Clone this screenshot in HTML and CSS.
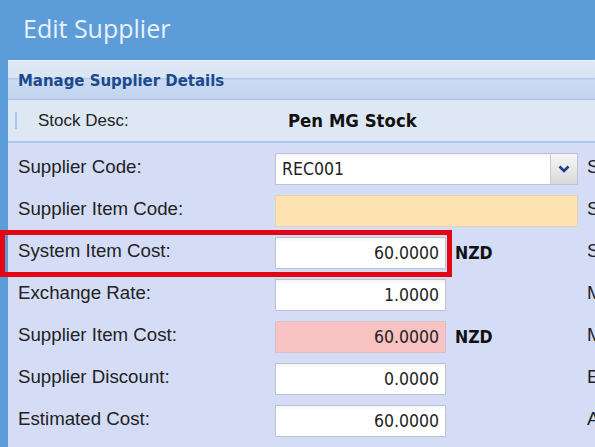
FILE: index.html
```html
<!DOCTYPE html>
<html>
<head>
<meta charset="utf-8">
<link rel="stylesheet" href="styles.css">
</head>
<body>
<div class="page">
  <div class="title">Edit Supplier</div>
  <div class="panel">
    <div class="panel-head">Manage Supplier Details</div>
    <div class="stock-row">
      <span class="stock-bar"></span>
      <span class="stock-label">Stock Desc:</span>
      <span class="stock-value">Pen MG Stock</span>
    </div>
    <div class="form">
      <div class="row">
        <div class="label">Supplier Code:</div>
        <div class="combo"><div class="combo-text">REC001</div><div class="combo-btn"><svg width="12" height="8" viewBox="0 0 12 8"><path d="M1.5 1.5 L6 6 L10.5 1.5" fill="none" stroke="#1c3f8c" stroke-width="2.6"/></svg></div></div>
        <div class="cut">S</div>
      </div>
      <div class="row">
        <div class="label">Supplier Item Code:</div>
        <div class="field wide orange"></div>
        <div class="cut">S</div>
      </div>
      <div class="row">
        <span class="highlight"></span>
        <div class="label">System Item Cost:</div>
        <div class="field num">60.0000</div>
        <div class="unit">NZD</div>
        <div class="cut">S</div>
      </div>
      <div class="row">
        <div class="label">Exchange Rate:</div>
        <div class="field num">1.0000</div>
        <div class="unit"></div>
        <div class="cut">M</div>
      </div>
      <div class="row">
        <div class="label">Supplier Item Cost:</div>
        <div class="field num pink">60.0000</div>
        <div class="unit">NZD</div>
        <div class="cut">M</div>
      </div>
      <div class="row">
        <div class="label">Supplier Discount:</div>
        <div class="field num">0.0000</div>
        <div class="unit"></div>
        <div class="cut">E</div>
      </div>
      <div class="row">
        <div class="label">Estimated Cost:</div>
        <div class="field num">60.0000</div>
        <div class="unit"></div>
        <div class="cut">A</div>
      </div>
    </div>
  </div>
</div>
</body>
</html>
```
FILE: styles.css
```css
html, body {
  margin: 0;
  padding: 0;
}
body {
  background: #5b9cd9;
  width: 595px;
  height: 447px;
  overflow: hidden;
}
.page {
  width: 595px;
  height: 447px;
  overflow: hidden;
}
.title {
  height: 60px;
  box-sizing: border-box;
  padding: 11px 0 0 23px;
  font-family: "Open Sans", sans-serif;
  font-size: 25px;
  color: #eaf1fa;
  line-height: 34px;
}
.panel {
  margin-left: 8px;
  width: 620px;
  height: 400px;
  background: #d5ddf6;
}
.panel-head {
  height: 40px;
  box-sizing: border-box;
  border-top: 1px solid #eef4fb;
  border-bottom: 1px solid #a9c3e8;
  background: linear-gradient(to bottom, #dfe8f5 0, #d9e4f4 17px, #b3cbea 17px, #b3cbea 18px, #cbdbf2 19px, #c2d4ef 38px);
  padding-left: 10px;
  font-family: "DejaVu Sans", sans-serif;
  font-stretch: condensed;
  font-weight: bold;
  font-size: 16.6px;
  color: #1b4a8e;
  line-height: 39px;
}
.stock-row {
  height: 43px;
  box-sizing: border-box;
  border-bottom: 2px solid #a9cbe9;
  background: #dee8f5;
  display: flex;
  align-items: center;
}
.stock-bar {
  width: 2px;
  height: 17px;
  margin-left: 7px;
  background: #a5c6f0;
}
.stock-label {
  margin-left: 21px;
  width: 250px;
  font-family: "Liberation Sans", Arial, sans-serif;
  font-size: 17px;
  color: #222;
}
.stock-value {
  font-family: "DejaVu Sans", sans-serif;
  font-stretch: condensed;
  font-weight: bold;
  font-size: 18.4px;
  color: #111;
}
.form {
  padding: 10px 0 0 10px;
  display: flex;
  flex-direction: column;
  gap: 10px;
}
.row {
  position: relative;
  height: 32px;
  display: flex;
  align-items: center;
}
.label {
  width: 257px;
  font-family: "Liberation Sans", Arial, sans-serif;
  font-size: 18.7px;
  color: #222;
  margin-top: -4px;
}
.field, .combo {
  height: 32px;
  box-sizing: border-box;
  border: 1px solid #bcc3cf;
  background: linear-gradient(to bottom, #f4f4f4 0, #ffffff 4px);
  font-family: "DejaVu Sans", sans-serif;
  font-stretch: condensed;
  font-size: 17.5px;
  color: #222;
  line-height: 30px;
}
.field {
  width: 171px;
}
.num {
  text-align: right;
  padding-right: 6px;
}
.wide {
  width: 303px;
}
.orange {
  background: #fde3b2;
  border-color: #e3d3b4;
}
.pink {
  background: #f9c2c3;
  border-color: #d8c0c4;
}
.combo {
  width: 303px;
  display: flex;
}
.combo-text {
  flex: 1;
  padding-left: 6px;
}
.combo-btn {
  width: 26px;
  border-left: 1px solid #c8ccd2;
  background: linear-gradient(to bottom, #f6f6f6, #d9d9d9);
  display: flex;
  align-items: center;
  justify-content: center;
}
.unit {
  width: 132px;
  padding-left: 9px;
  box-sizing: border-box;
  font-family: "DejaVu Sans", sans-serif;
  font-stretch: condensed;
  font-weight: bold;
  font-size: 17.5px;
  color: #111;
}
.cut {
  margin-left: 9px;
  font-family: "Liberation Sans", Arial, sans-serif;
  font-size: 18.7px;
  color: #222;
  margin-top: -4px;
}
.highlight {
  position: absolute;
  left: -18px;
  top: -7px;
  width: 452px;
  height: 47px;
  box-sizing: border-box;
  border: 5px solid #e30613;
}
```
